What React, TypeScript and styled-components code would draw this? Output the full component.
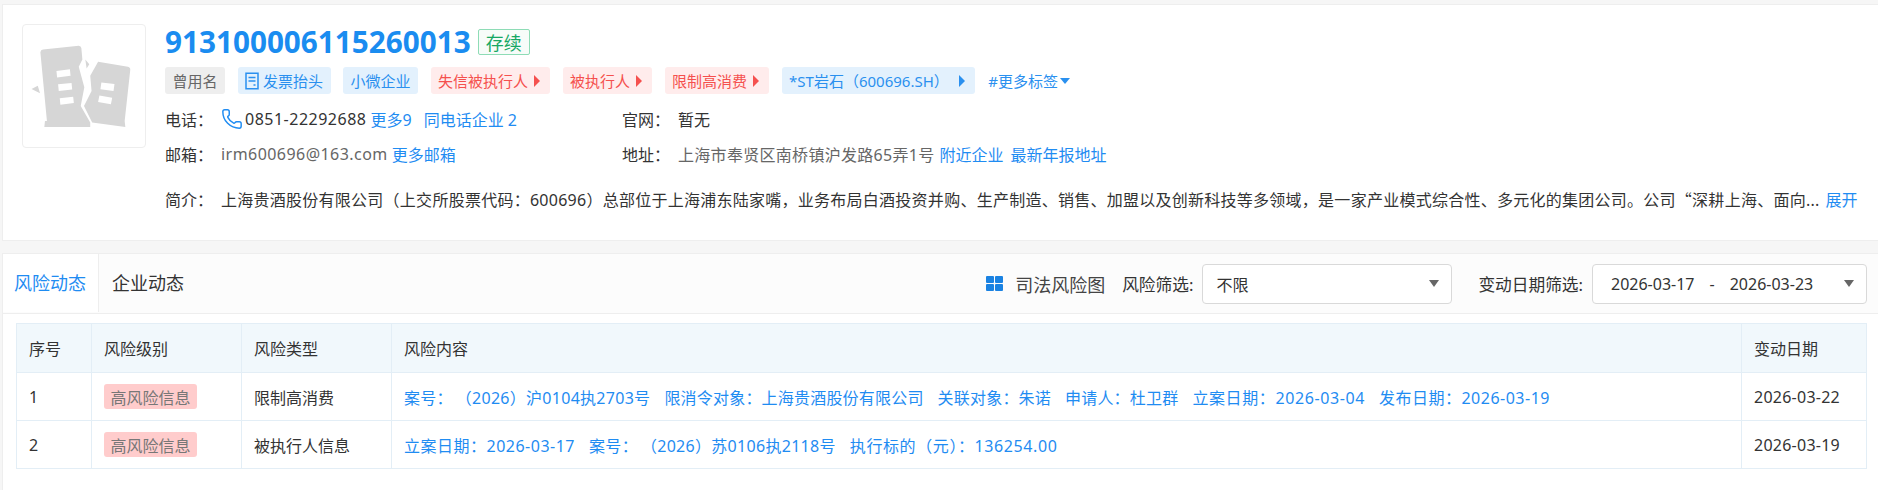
import React from "react";
import styled, { createGlobalStyle } from "styled-components";
import { Phone } from "lucide-react";

const FONT = `"Noto Sans", "Noto Sans CJK SC", sans-serif`;
const BLUE = "#1f8cf2";

const Global = createGlobalStyle`
  html, body { margin: 0; padding: 0; background: #f6f6f6; }
  body { font-family: ${FONT}; font-size: 16px; color: #333; }
  * { box-sizing: border-box; }
`;

const Page = styled.div`
  width: 1878px;
  height: 490px;
  padding: 4px 0 0 2px;
  overflow: hidden;
`;

const HeaderCard = styled.section`
  height: 237px;
  display: flex;
  gap: 19px;
  padding: 19px 0 0 19px;
  background: #fff;
  border: 1px solid #eeeeee;
  border-right: 0;
`;

const LogoBox = styled.div`
  width: 124px;
  height: 124px;
  flex: none;
  border: 1px solid #eeeeee;
  border-radius: 4px;
`;

const Info = styled.div`
  flex: 1;
  min-width: 0;
`;

const TitleRow = styled.div`
  height: 35px;
  display: flex;
  align-items: center;
  gap: 7px;
`;

const Title = styled.h1`
  margin: 0;
  font-size: 29.7px;
  line-height: 35px;
  font-weight: 700;
  color: #1a8cf0;
`;

const Status = styled.span`
  width: 52px;
  height: 26px;
  display: flex;
  align-items: center;
  justify-content: center;
  font-size: 18px;
  color: #16a864;
  background: #f7fcf9;
  border: 1px solid #8edcb6;
  border-radius: 2px;
`;

const Tags = styled.div`
  display: flex;
  align-items: center;
  gap: 12.5px;
  margin-top: 8px;
`;

const tagColors = {
  gray: "background:#eeeeee;color:#666;",
  blue: "background:#e3f1fd;color:#2a90ef;",
  red: "background:#ffecec;color:#f5504e;",
};

const Tag = styled.span<{ $tone: keyof typeof tagColors; $arrow?: boolean }>`
  height: 27px;
  display: inline-flex;
  align-items: center;
  gap: 4px;
  padding: 0 ${(p) => (p.$arrow ? 10 : 7.5)}px 0 7.5px;
  font-size: 15px;
  border-radius: 3px;
  white-space: nowrap;
  ${(p) => tagColors[p.$tone]}
`;

const Tri = styled.i<{ $down?: boolean; $gap?: number }>`
  display: inline-block;
  width: 0;
  height: 0;
  margin-left: ${(p) => p.$gap ?? 2}px;
  ${(p) =>
    p.$down
      ? "border-left:5px solid transparent;border-right:5px solid transparent;border-top:6px solid currentColor;"
      : "border-top:6px solid transparent;border-bottom:6px solid transparent;border-left:6px solid currentColor;"}
`;

const MoreTags = styled.span`
  display: inline-flex;
  align-items: center;
  gap: 0;
  margin-left: 1px;
  font-size: 15px;
  color: #2a90ef;
`;

const InfoGrid = styled.div`
  display: grid;
  grid-template-columns: 457px 1fr;
  row-gap: 5px;
  margin-top: 11px;
`;

const Field = styled.div`
  height: 30px;
  padding-bottom: 2px;
  display: flex;
  align-items: center;
  font-size: 16px;
  white-space: nowrap;
`;

const Label = styled.span`
  width: 56px;
  flex: none;
  color: #333;
`;

const Value = styled.span<{ $muted?: boolean; $spread?: number }>`
  color: ${(p) => (p.$muted ? "#666" : "#333")};
  letter-spacing: ${(p) => p.$spread ?? 0}px;
`;

const PhoneIcon = styled(Phone)`
  flex: none;
  margin-right: 2px;
`;

const Link = styled.a<{ $gap?: number }>`
  color: ${BLUE};
  margin-left: ${(p) => p.$gap ?? 5}px;
`;

const Intro = styled(Field)`
  margin-top: 15px;
  width: 1694px;
`;

const IntroText = styled.span`
  color: #333;
  letter-spacing: 0.26px;
`;

const CjkQuote = styled.span`
  font-family: "Noto Sans CJK SC", sans-serif;
`;

const RiskCard = styled.section`
  margin-top: 12px;
  background: #fff;
  border: 1px solid #eeeeee;
  border-right: 0;
  height: 240px;
`;

const TabBar = styled.div`
  height: 60px;
  display: flex;
  align-items: stretch;
  background: #fcfcfc;
  border-bottom: 1px solid #eeeeee;
`;

const Tab = styled.div<{ $active?: boolean }>`
  width: ${(p) => (p.$active ? 96 : 98)}px;
  height: 58px;
  display: flex;
  align-items: center;
  padding: 0 0 2px ${(p) => (p.$active ? 11 : 13)}px;
  font-size: 18px;
  color: ${(p) => (p.$active ? BLUE : "#333")};
  background: ${(p) => (p.$active ? "#fff" : "transparent")};
  border-right: ${(p) => (p.$active ? "1px solid #eeeeee" : "0")};
`;

const Filters = styled.div`
  flex: 1;
  display: flex;
  align-items: center;
  justify-content: flex-end;
  padding-right: 11px;
  font-size: 16px;
  color: #333;
`;

const MapLink = styled.span`
  display: inline-flex;
  align-items: center;
  gap: 12px;
  margin-right: 17px;
  font-size: 18px;
  color: #444;
`;

const FilterLabel = styled.span`
  margin-right: 9px;
  font-size: 16.7px;
  white-space: nowrap;
`;

const Select = styled.div<{ $w: number }>`
  width: ${(p) => p.$w}px;
  height: 40px;
  display: flex;
  align-items: center;
  padding: 0 12px 0 13px;
  background: #fff;
  border: 1px solid #d9d9d9;
  border-radius: 4px;
  color: #333;
  white-space: nowrap;
`;

const SelectText = styled.span`
  flex: 1;
`;

const DateText = styled.span`
  flex: 1;
  padding-left: 5px;
`;

const DateDash = styled.span`
  margin: 0 15px;
`;

const Caret = styled.i`
  width: 0;
  height: 0;
  border-left: 5px solid transparent;
  border-right: 5px solid transparent;
  border-top: 7px solid #666;
`;

const SelectGap = styled.span`
  width: 26px;
`;

const TableWrap = styled.div`
  padding: 9px 11px 0 13px;
`;

const Table = styled.table`
  width: 100%;
  table-layout: fixed;
  border-collapse: collapse;
  font-size: 16px;
`;

const Th = styled.th`
  height: 49px;
  padding: 0 12px;
  text-align: left;
  font-weight: 400;
  color: #333;
  background: #f1f8fc;
  border: 1px solid #e3eef6;
`;

const Td = styled.td`
  height: 48px;
  padding: 0 12px;
  color: #333;
  background: #fff;
  border: 1px solid #e3eef6;
`;

const DateCell = styled(Td)`
  letter-spacing: 0.25px;
`;

const Badge = styled.span`
  width: 93px;
  height: 25px;
  display: inline-flex;
  align-items: center;
  justify-content: center;
  font-size: 16px;
  color: #777;
  background: #ffcccc;
  border-radius: 3px;
  vertical-align: middle;
`;

const Facts = styled.div`
  display: flex;
  gap: 14px;
  color: ${BLUE};
  white-space: nowrap;
`;

const Fact = styled.span<{ $spread: number }>`
  letter-spacing: ${(p) => p.$spread}px;
`;

const rows = [
  {
    no: 1,
    type: "限制高消费",
    date: "2026-03-22",
    facts: [
      { text: "案号：\u2009（2026）沪0104执2703号", spread: 0.28 },
      { text: "限消令对象：上海贵酒股份有限公司", spread: 0.2 },
      { text: "关联对象：朱诺", spread: 0.2 },
      { text: "申请人：杜卫群", spread: 0.2 },
      { text: "立案日期：2026-03-04", spread: 0.6 },
      { text: "发布日期：2026-03-19", spread: 0.5 },
    ],
  },
  {
    no: 2,
    type: "被执行人信息",
    date: "2026-03-19",
    facts: [
      { text: "立案日期：2026-03-17", spread: 0.5 },
      { text: "案号：\u2009（2026）苏0106执2118号", spread: 0.3 },
      { text: "执行标的（元）：136254.00", spread: 0.6 },
    ],
  },
];

const BrokenLogo = () => (
  <svg width="122" height="122" viewBox="35 25 372 372" fill="#d6d6d6">
    <path
      fillRule="evenodd"
      d="M96 100 L205 88 Q212 88 213 96 L216 130 L205 152 L222 215 L211 272 L240 322 L240 336 L100 336 L102 318 L108 318 L88 108 Q89 101 96 100 Z M137 165 L178 160 L180 180 L139 185 Z M142 206 L183 202 L185 222 L144 226 Z M147 248 L188 244 L190 263 L149 268 Z"
    />
    <path
      fillRule="evenodd"
      d="M264 137 L355 152 Q363 154 362 162 L345 318 L347 336 L246 322 L221 272 L244 226 L240 180 Z M274 200 L314 205 L311 226 L271 221 Z M268 240 L307 247 L303 267 L264 260 Z"
    />
    <path d="M225 130 L237 145 L229 158 Z M61 220 L80 210 L87 233 Z" />
  </svg>
);

const InvoiceIcon = () => (
  <svg width="14" height="18" viewBox="0 0 14 18" fill="none" stroke="currentColor" strokeWidth="1.5">
    <path d="M1 1.2 H13 V16.8 H1 Z" />
    <path d="M3.5 5.5 H10.5 M3.5 9 H10.5 M8.5 13 H10.5" />
  </svg>
);

const GridIcon = () => (
  <svg width="17" height="15" viewBox="0 0 17 15" fill="#1a82e2">
    <rect x="0" y="0" width="8" height="7" rx="1" />
    <rect x="9" y="0" width="8" height="7" rx="1" />
    <rect x="0" y="8" width="8" height="7" rx="1" />
    <rect x="9" y="8" width="8" height="7" rx="1" />
  </svg>
);

export default function App() {
  return (
    <Page>
      <Global />
      <HeaderCard>
        <LogoBox>
          <BrokenLogo />
        </LogoBox>
        <Info>
          <TitleRow>
            <Title>913100006115260013</Title>
            <Status>存续</Status>
          </TitleRow>
          <Tags>
            <Tag $tone="gray">曾用名</Tag>
            <Tag $tone="blue">
              <InvoiceIcon />
              发票抬头
            </Tag>
            <Tag $tone="blue">小微企业</Tag>
            <Tag $tone="red" $arrow>
              失信被执行人
              <Tri />
            </Tag>
            <Tag $tone="red" $arrow>
              被执行人
              <Tri />
            </Tag>
            <Tag $tone="red" $arrow>
              限制高消费
              <Tri />
            </Tag>
            <Tag $tone="blue" $arrow>
              *ST岩石（600696.SH）
              <Tri $gap={6} />
            </Tag>
            <MoreTags>
              #更多标签
              <Tri $down />
            </MoreTags>
          </Tags>
          <InfoGrid>
            <Field>
              <Label>电话：</Label>
              <PhoneIcon size={22} color={BLUE} strokeWidth={1.6} />
              <Value $spread={0.5}>0851-22292688</Value>
              <Link $gap={4}>更多9</Link>
              <Link $gap={12}>同电话企业 2</Link>
            </Field>
            <Field>
              <Label>官网：</Label>
              <Value>暂无</Value>
            </Field>
            <Field>
              <Label>邮箱：</Label>
              <Value $muted $spread={0.45}>
                irm600696@163.com
              </Value>
              <Link $gap={4}>更多邮箱</Link>
            </Field>
            <Field>
              <Label>地址：</Label>
              <Value $muted $spread={0.3}>
                上海市奉贤区南桥镇沪发路65弄1号
              </Value>
              <Link>附近企业</Link>
              <Link $gap={7}>最新年报地址</Link>
            </Field>
          </InfoGrid>
          <Intro>
            <Label>简介：</Label>
            <IntroText>
              上海贵酒股份有限公司（上交所股票代码：600696）总部位于上海浦东陆家嘴，业务布局白酒投资并购、生产制造、销售、加盟以及创新科技等多领域，是一家产业模式综合性、多元化的集团公司。公司
              <CjkQuote>“</CjkQuote>深耕上海、面向...
            </IntroText>
            <Link $gap={6}>展开</Link>
          </Intro>
        </Info>
      </HeaderCard>
      <RiskCard>
        <TabBar>
          <Tab $active>风险动态</Tab>
          <Tab>企业动态</Tab>
          <Filters>
            <MapLink>
              <GridIcon />
              司法风险图
            </MapLink>
            <FilterLabel>风险筛选:</FilterLabel>
            <Select $w={250}>
              <SelectText>不限</SelectText>
              <Caret />
            </Select>
            <SelectGap />
            <FilterLabel>变动日期筛选:</FilterLabel>
            <Select $w={275}>
              <DateText>
                2026-03-17<DateDash>-</DateDash>2026-03-23
              </DateText>
              <Caret />
            </Select>
          </Filters>
        </TabBar>
        <TableWrap>
          <Table>
            <colgroup>
              <col style={{ width: 75 }} />
              <col style={{ width: 150 }} />
              <col style={{ width: 150 }} />
              <col />
              <col style={{ width: 125 }} />
            </colgroup>
            <thead>
              <tr>
                <Th>序号</Th>
                <Th>风险级别</Th>
                <Th>风险类型</Th>
                <Th>风险内容</Th>
                <Th>变动日期</Th>
              </tr>
            </thead>
            <tbody>
              {rows.map((r) => (
                <tr key={r.no}>
                  <Td>{r.no}</Td>
                  <Td>
                    <Badge>高风险信息</Badge>
                  </Td>
                  <Td>{r.type}</Td>
                  <Td>
                    <Facts>
                      {r.facts.map((f) => (
                        <Fact key={f.text} $spread={f.spread}>
                          {f.text}
                        </Fact>
                      ))}
                    </Facts>
                  </Td>
                  <DateCell>{r.date}</DateCell>
                </tr>
              ))}
            </tbody>
          </Table>
        </TableWrap>
      </RiskCard>
    </Page>
  );
}
